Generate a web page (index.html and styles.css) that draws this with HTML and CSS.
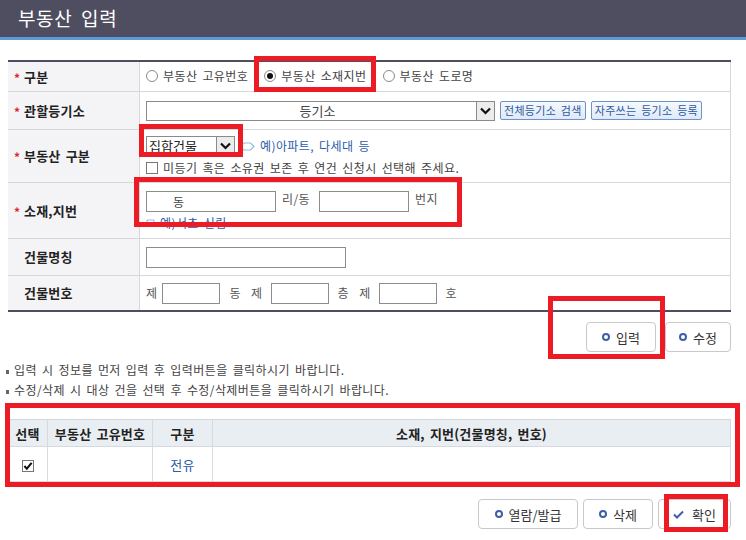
FILE: index.html
```html
<!DOCTYPE html>
<html>

<head>
    <meta charset="UTF-8">
    <title>부동산 입력</title>
    <link rel="stylesheet" href="styles.css">
</head>

<body>
    <div class="page">
        <header class="title-bar">
            <h1>부동산 입력</h1>
        </header>

        <table class="form-table">
            <tr class="r1">
                <th><span class="req">*</span>구분</th>
                <td>
                    <label class="radio"><span class="radio-mark"></span>부동산 고유번호</label>
                    <label class="radio"><span class="radio-mark checked"></span>부동산 소재지번</label>
                    <label class="radio"><span class="radio-mark"></span>부동산 도로명</label>
                </td>
            </tr>
            <tr class="r2">
                <th><span class="req">*</span>관할등기소</th>
                <td>
                    <div class="line">
                        <span class="select select-wide">
                            <span class="select-value center">등기소</span>
                            <span class="select-btn"><svg width="11" height="8" viewBox="0 0 11 8"><path d="M1 1.5 L5.5 6 L10 1.5" fill="none" stroke="#111" stroke-width="2.2"/></svg></span>
                        </span>
                        <button class="sbtn">전체등기소 검색</button>
                        <button class="sbtn">자주쓰는 등기소 등록</button>
                    </div>
                </td>
            </tr>
            <tr class="r3">
                <th><span class="req">*</span>부동산 구분</th>
                <td>
                    <div class="line">
                        <span class="select select-small">
                            <span class="select-value">집합건물</span>
                            <span class="select-btn"><svg width="11" height="8" viewBox="0 0 11 8"><path d="M1 1.5 L5.5 6 L10 1.5" fill="none" stroke="#111" stroke-width="2.2"/></svg></span>
                        </span>
                        <span class="hint"><svg class="hint-icon" width="14" height="9" viewBox="0 0 14 9"><path d="M4 1 H9.5 L13 4.5 L9.5 8 H4 A3.5 3.5 0 0 1 4 1 Z" fill="none" stroke="#8dbbe6" stroke-width="1.2"/></svg>예)아파트, 다세대 등</span>
                    </div>
                    <div class="line line-check">
                        <span class="checkbox"></span>미등기 혹은 소유권 보존 후 연건 신청시 선택해 주세요.
                    </div>
                </td>
            </tr>
            <tr class="r4">
                <th><span class="req">*</span>소재,지번</th>
                <td>
                    <div class="line">
                        <span class="input input-dong">동</span>
                        <span class="unit">리/동</span>
                        <span class="input input-bunji"></span>
                        <span class="unit">번지</span>
                    </div>
                    <div class="line line-hint">
                        <span class="hint"><svg class="hint-icon" width="9" height="9" viewBox="0 0 9 9"><rect x="1" y="2" width="7" height="5" rx="1" fill="none" stroke="#8dbbe6" stroke-width="1.2"/></svg>예)서초 신림</span>
                    </div>
                </td>
            </tr>
            <tr class="r5">
                <th>건물명칭</th>
                <td><span class="input input-name"></span></td>
            </tr>
            <tr class="r6">
                <th>건물번호</th>
                <td>
                    <div class="line">
                        <span class="unit first">제</span>
                        <span class="input input-no"></span>
                        <span class="unit">동&nbsp;&nbsp;제</span>
                        <span class="input input-no"></span>
                        <span class="unit">층&nbsp;&nbsp;제</span>
                        <span class="input input-no"></span>
                        <span class="unit">호</span>
                    </div>
                </td>
            </tr>
        </table>

        <div class="btn-row">
            <button class="btn w70"><span class="ring"></span>입력</button>
            <button class="btn w66"><span class="ring"></span>수정</button>
        </div>

        <ul class="notes">
            <li>입력 시 정보를 먼저 입력 후 입력버튼을 클릭하시기 바랍니다.</li>
            <li>수정/삭제 시 대상 건을 선택 후 수정/삭제버튼을 클릭하시기 바랍니다.</li>
        </ul>

        <table class="list-table">
            <tr>
                <th class="c1">선택</th>
                <th class="c2">부동산 고유번호</th>
                <th class="c3">구분</th>
                <th>소재, 지번(건물명칭, 번호)</th>
            </tr>
            <tr>
                <td><span class="checkbox checked"><svg width="11" height="10" viewBox="0 0 11 10"><path d="M1.5 5 L4.2 8 L9.5 1.5" fill="none" stroke="#111" stroke-width="2.2"/></svg></span></td>
                <td></td>
                <td class="link">전유</td>
                <td></td>
            </tr>
        </table>

        <div class="btn-row bottom">
            <button class="btn w100"><span class="ring"></span>열람/발급</button>
            <button class="btn w70"><span class="ring"></span>삭제</button>
            <button class="btn w73"><svg class="tick" width="11" height="9" viewBox="0 0 11 9"><path d="M1 4.5 L4 7.5 L10 1.5" fill="none" stroke="#3d5ea8" stroke-width="2"/></svg>확인</button>
        </div>

        <!-- red annotation frames -->
        <div class="mark m1"></div>
        <div class="mark m2"></div>
        <div class="mark m3"></div>
        <div class="mark m4"></div>
        <div class="mark m5"></div>
        <div class="mark m6"></div>
    </div>
</body>

</html>
```

FILE: styles.css
```css
* {
    box-sizing: border-box;
    margin: 0;
    padding: 0;
}

body {
    font-family: "Noto Sans CJK KR", "Noto Sans", sans-serif;
    font-size: 12px;
    letter-spacing: 0.4px;
    word-spacing: 2px;
    color: #333;
    background: #fff;
}

.page {
    position: relative;
    width: 746px;
    height: 540px;
    overflow: hidden;
}

/* title */
.title-bar {
    height: 40px;
    background: #4f4e61;
    border-bottom: 3px solid #5b9bd5;
}

.title-bar h1 {
    font-size: 19px;
    font-weight: 400;
    color: #fff;
    line-height: 36px;
    padding-left: 18px;
    letter-spacing: 0.6px;
    word-spacing: 4px;
}

/* input form */
.form-table {
    margin: 20px 0 0 8px;
    width: 723px;
    border-collapse: separate;
    border-spacing: 0;
    border-top: 2px solid #4f4e61;
    border-bottom: 2px solid #4f4e61;
}

.form-table th,
.form-table td {
    border-bottom: 1px solid #d8d8dc;
    vertical-align: middle;
}

.form-table tr:last-child th,
.form-table tr:last-child td {
    border-bottom: none;
}

.form-table th {
    width: 132px;
    background: #f4f4f6;
    border-right: 1px solid #d8d8dc;
    text-align: left;
    font-size: 13px;
    font-weight: 700;
    color: #222;
    padding-left: 16px;
    line-height: 16px;
    letter-spacing: 0.2px;
}

.form-table td {
    padding-left: 6px;
    border-right: 1px solid #d8d8dc;
    line-height: 16px;
}

.r1 th, .r1 td { height: 30px; }
.r2 th, .r2 td { height: 38px; }
.r3 th, .r3 td { height: 53px; }
.r4 th, .r4 td { height: 56px; }
.r5 th, .r5 td { height: 37px; }
.r6 th, .r6 td { height: 34px; }

.req {
    display: inline-block;
    width: 10px;
    margin-left: -10px;
    color: #e0262b;
    font-size: 12px;
    position: relative;
    top: 1px;
}

.line {
    display: flex;
    align-items: center;
}

/* radios */
.radio {
    display: inline-flex;
    align-items: center;
    color: #444;
    margin-right: 11px;
}

.radio-mark {
    width: 12px;
    height: 12px;
    border: 1px solid #8a8a8a;
    border-radius: 50%;
    margin-right: 5px;
    position: relative;
    background: #fff;
}

.radio-mark.checked::after {
    content: "";
    position: absolute;
    left: 2px;
    top: 2px;
    width: 6px;
    height: 6px;
    border-radius: 50%;
    background: #111;
}

/* fake selects */
.select {
    display: inline-flex;
    height: 20px;
    border: 1px solid #8a8a8a;
    background: #fff;
}

.select-wide {
    width: 349px;
}

.select-small {
    width: 89px;
    height: 20px;
}

.select-value {
    flex: 1;
    line-height: 18px;
    font-size: 13px;
    color: #222;
    padding-left: 2px;
    letter-spacing: 0;
}

.select-value.center {
    text-align: center;
    padding-left: 12px;
    color: #444;
}

.select-btn {
    width: 18px;
    border-left: 1px solid #8a8a8a;
    background: #ececec;
    display: flex;
    align-items: center;
    justify-content: center;
}

.sbtn {
    height: 19px;
    margin-left: 5px;
    padding: 0 3px;
    font-family: inherit;
    font-size: 11px;
    letter-spacing: 0.3px;
    word-spacing: 2px;
    color: #2b5aa3;
    border: 1px solid #6d92c8;
    border-radius: 2px;
    background: linear-gradient(#f6f9fd, #dfe9f6);
    line-height: 17px;
}

.hint {
    display: inline-flex;
    align-items: center;
    color: #2a5ca8;
    margin-left: 6px;
}

.hint-icon {
    margin-right: 5px;
}

.line-check {
    margin-top: 4px;
    color: #444;
}

.checkbox {
    display: inline-flex;
    align-items: center;
    justify-content: center;
    width: 12px;
    height: 12px;
    border: 1px solid #777;
    background: #fff;
    margin-right: 5px;
}

/* text boxes */
.input {
    display: inline-block;
    height: 21px;
    border: 1px solid #8c8c8c;
    background: #fff;
    line-height: 19px;
    color: #444;
}

.input-dong {
    width: 130px;
    padding-left: 26px;
}

.input-bunji {
    width: 90px;
}

.input-name {
    width: 200px;
    vertical-align: middle;
}

.input-no {
    width: 58px;
}

.unit {
    color: #555;
    font-weight: 400;
    margin: 0 9px 0 6px;
    align-self: flex-start;
    line-height: 16px;
}

.r6 .unit {
    align-self: center;
    margin: 0 8px 0 9px;
}

.r6 .unit.first {
    margin: 0 5px 0 0;
}

.line-hint {
    margin-top: 3px;
}

.line-hint .hint {
    margin-left: 0;
}

/* buttons */
.btn-row {
    display: flex;
    justify-content: flex-end;
    gap: 9px;
    width: 731px;
    margin-top: 10px;
}

.btn-row.bottom {
    gap: 5px;
    margin-top: 17px;
}

.btn {
    display: inline-flex;
    align-items: center;
    justify-content: center;
    height: 30px;
    padding: 0;
    font-family: inherit;
    font-size: 13px;
    letter-spacing: 0;
    color: #333;
    background: #fff;
    border: 1px solid #c9c9c9;
    border-radius: 4px;
}

.w66 { width: 66px; }
.w70 { width: 70px; }
.w73 { width: 73px; }
.w100 { width: 100px; }

.ring {
    width: 8px;
    height: 8px;
    border: 2px solid #3d5ea8;
    border-radius: 50%;
    margin-right: 6px;
}

.tick {
    margin-right: 8px;
}

/* notes */
.notes {
    list-style: none;
    margin-top: 8px;
    padding-left: 6px;
}

.notes li {
    line-height: 20px;
    color: #444;
}

.notes li::before {
    content: "";
    display: inline-block;
    width: 3px;
    height: 4px;
    background: #666;
    margin-right: 5px;
    vertical-align: middle;
}

/* result list */
.list-table {
    margin: 19px 0 0 8px;
    width: 723px;
    border-collapse: separate;
    border-spacing: 0;
    border-top: 1px solid #d3d7dc;
}

.list-table th,
.list-table td {
    border-right: 1px solid #d6d9de;
    border-bottom: 1px solid #d6d9de;
    text-align: center;
}

.list-table th {
    height: 27px;
    background: #e9eef3;
    font-size: 13px;
    font-weight: 700;
    color: #222;
    letter-spacing: 0.2px;
}

.list-table td {
    height: 35px;
}

.list-table .c1 { width: 40px; }
.list-table .c2 { width: 105px; }
.list-table .c3 { width: 60px; }

.list-table td .checkbox {
    margin: 0;
    width: 12px;
    height: 12px;
    vertical-align: middle;
}

.list-table .link {
    color: #2a5ca8;
    font-size: 13px;
}

/* red annotation frames */
.mark {
    position: absolute;
    border: 5px solid #ed1c24;
}

.m1 { left: 254px; top: 56px; width: 122px; height: 36px; }
.m2 { left: 139px; top: 124px; width: 104px; height: 33px; }
.m3 { left: 134px; top: 177px; width: 328px; height: 50px; }
.m4 { left: 548px; top: 296px; width: 117px; height: 63px; }
.m5 { left: 5px; top: 403px; width: 735px; height: 84px; }
.m6 { left: 664px; top: 494px; width: 64px; height: 38px; }
```
